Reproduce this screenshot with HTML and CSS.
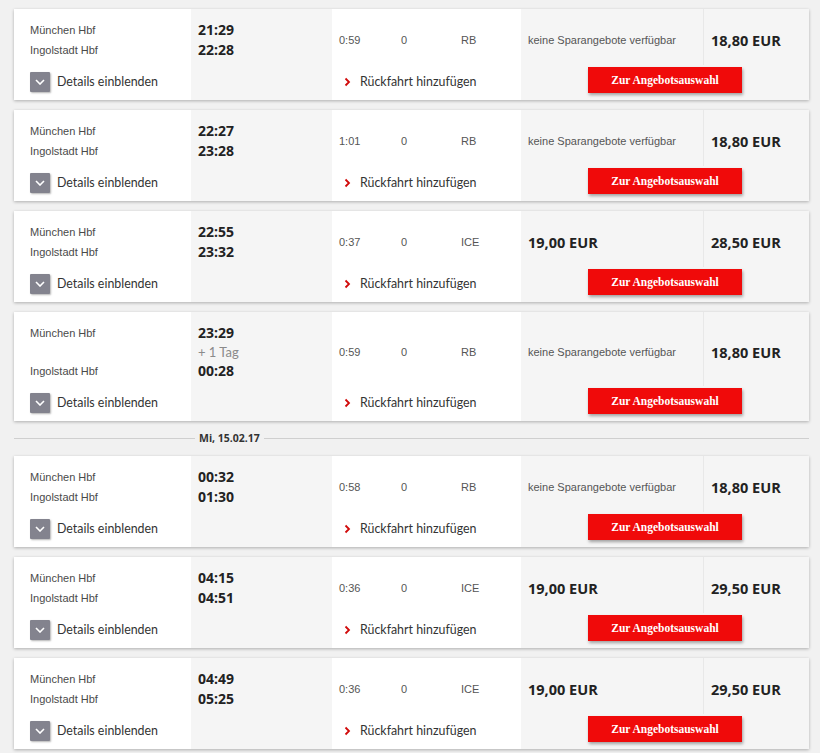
FILE: index.html
```html
<!DOCTYPE html>
<html lang="de">
<head>
    <meta charset="UTF-8">
    <meta name="viewport" content="width=device-width, initial-scale=1.0">
    <title>Verbindungen | München Hbf – Ingolstadt Hbf</title>
    <link rel="stylesheet" href="styles.css">
</head>
<body>

<div class="results">

    <!-- 21:29 -->
    <div class="card">
        <div class="stations">
            <div class="line">München Hbf</div>
            <div class="line">Ingolstadt Hbf</div>
        </div>
        <div class="times">
            <div class="line">21:29</div>
            <div class="line">22:28</div>
        </div>
        <div class="info">
            <span class="dur">0:59</span><span class="chg">0</span><span class="prod">RB</span>
        </div>
        <div class="fare"><span class="none">keine Sparangebote verfügbar</span></div>
        <div class="fare flex"><span class="price">18,80 EUR</span></div>
        <div class="details"><span class="toggle"><svg width="10" height="6" viewBox="0 0 10 6"><path d="M1 1 L5 5 L9 1" fill="none" stroke="#fff" stroke-width="1.6"/></svg></span>Details einblenden</div>
        <div class="return"><svg width="7" height="10" viewBox="0 0 7 10"><path d="M1.5 1.5 L5 5 L1.5 8.5" fill="none" stroke="#d10a0a" stroke-width="1.8"/></svg>Rückfahrt hinzufügen</div>
        <div class="action"><button class="offer-btn">Zur Angebotsauswahl</button></div>
    </div>

    <!-- 22:27 -->
    <div class="card">
        <div class="stations">
            <div class="line">München Hbf</div>
            <div class="line">Ingolstadt Hbf</div>
        </div>
        <div class="times">
            <div class="line">22:27</div>
            <div class="line">23:28</div>
        </div>
        <div class="info">
            <span class="dur">1:01</span><span class="chg">0</span><span class="prod">RB</span>
        </div>
        <div class="fare"><span class="none">keine Sparangebote verfügbar</span></div>
        <div class="fare flex"><span class="price">18,80 EUR</span></div>
        <div class="details"><span class="toggle"><svg width="10" height="6" viewBox="0 0 10 6"><path d="M1 1 L5 5 L9 1" fill="none" stroke="#fff" stroke-width="1.6"/></svg></span>Details einblenden</div>
        <div class="return"><svg width="7" height="10" viewBox="0 0 7 10"><path d="M1.5 1.5 L5 5 L1.5 8.5" fill="none" stroke="#d10a0a" stroke-width="1.8"/></svg>Rückfahrt hinzufügen</div>
        <div class="action"><button class="offer-btn">Zur Angebotsauswahl</button></div>
    </div>

    <!-- 22:55 -->
    <div class="card">
        <div class="stations">
            <div class="line">München Hbf</div>
            <div class="line">Ingolstadt Hbf</div>
        </div>
        <div class="times">
            <div class="line">22:55</div>
            <div class="line">23:32</div>
        </div>
        <div class="info">
            <span class="dur">0:37</span><span class="chg">0</span><span class="prod">ICE</span>
        </div>
        <div class="fare"><span class="price">19,00 EUR</span></div>
        <div class="fare flex"><span class="price">28,50 EUR</span></div>
        <div class="details"><span class="toggle"><svg width="10" height="6" viewBox="0 0 10 6"><path d="M1 1 L5 5 L9 1" fill="none" stroke="#fff" stroke-width="1.6"/></svg></span>Details einblenden</div>
        <div class="return"><svg width="7" height="10" viewBox="0 0 7 10"><path d="M1.5 1.5 L5 5 L1.5 8.5" fill="none" stroke="#d10a0a" stroke-width="1.8"/></svg>Rückfahrt hinzufügen</div>
        <div class="action"><button class="offer-btn">Zur Angebotsauswahl</button></div>
    </div>

    <!-- 23:29, next day -->
    <div class="card">
        <div class="stations">
            <div class="line">München Hbf</div>
            <div class="line small"></div>
            <div class="line">Ingolstadt Hbf</div>
        </div>
        <div class="times">
            <div class="line">23:29</div>
            <div class="line small next-day">+ 1 Tag</div>
            <div class="line">00:28</div>
        </div>
        <div class="info">
            <span class="dur">0:59</span><span class="chg">0</span><span class="prod">RB</span>
        </div>
        <div class="fare"><span class="none">keine Sparangebote verfügbar</span></div>
        <div class="fare flex"><span class="price">18,80 EUR</span></div>
        <div class="details"><span class="toggle"><svg width="10" height="6" viewBox="0 0 10 6"><path d="M1 1 L5 5 L9 1" fill="none" stroke="#fff" stroke-width="1.6"/></svg></span>Details einblenden</div>
        <div class="return"><svg width="7" height="10" viewBox="0 0 7 10"><path d="M1.5 1.5 L5 5 L1.5 8.5" fill="none" stroke="#d10a0a" stroke-width="1.8"/></svg>Rückfahrt hinzufügen</div>
        <div class="action"><button class="offer-btn">Zur Angebotsauswahl</button></div>
    </div>

    <div class="day-divider"><span>Mi, 15.02.17</span></div>

    <!-- 00:32 -->
    <div class="card">
        <div class="stations">
            <div class="line">München Hbf</div>
            <div class="line">Ingolstadt Hbf</div>
        </div>
        <div class="times">
            <div class="line">00:32</div>
            <div class="line">01:30</div>
        </div>
        <div class="info">
            <span class="dur">0:58</span><span class="chg">0</span><span class="prod">RB</span>
        </div>
        <div class="fare"><span class="none">keine Sparangebote verfügbar</span></div>
        <div class="fare flex"><span class="price">18,80 EUR</span></div>
        <div class="details"><span class="toggle"><svg width="10" height="6" viewBox="0 0 10 6"><path d="M1 1 L5 5 L9 1" fill="none" stroke="#fff" stroke-width="1.6"/></svg></span>Details einblenden</div>
        <div class="return"><svg width="7" height="10" viewBox="0 0 7 10"><path d="M1.5 1.5 L5 5 L1.5 8.5" fill="none" stroke="#d10a0a" stroke-width="1.8"/></svg>Rückfahrt hinzufügen</div>
        <div class="action"><button class="offer-btn">Zur Angebotsauswahl</button></div>
    </div>

    <!-- 04:15 -->
    <div class="card">
        <div class="stations">
            <div class="line">München Hbf</div>
            <div class="line">Ingolstadt Hbf</div>
        </div>
        <div class="times">
            <div class="line">04:15</div>
            <div class="line">04:51</div>
        </div>
        <div class="info">
            <span class="dur">0:36</span><span class="chg">0</span><span class="prod">ICE</span>
        </div>
        <div class="fare"><span class="price">19,00 EUR</span></div>
        <div class="fare flex"><span class="price">29,50 EUR</span></div>
        <div class="details"><span class="toggle"><svg width="10" height="6" viewBox="0 0 10 6"><path d="M1 1 L5 5 L9 1" fill="none" stroke="#fff" stroke-width="1.6"/></svg></span>Details einblenden</div>
        <div class="return"><svg width="7" height="10" viewBox="0 0 7 10"><path d="M1.5 1.5 L5 5 L1.5 8.5" fill="none" stroke="#d10a0a" stroke-width="1.8"/></svg>Rückfahrt hinzufügen</div>
        <div class="action"><button class="offer-btn">Zur Angebotsauswahl</button></div>
    </div>

    <!-- 04:49 -->
    <div class="card">
        <div class="stations">
            <div class="line">München Hbf</div>
            <div class="line">Ingolstadt Hbf</div>
        </div>
        <div class="times">
            <div class="line">04:49</div>
            <div class="line">05:25</div>
        </div>
        <div class="info">
            <span class="dur">0:36</span><span class="chg">0</span><span class="prod">ICE</span>
        </div>
        <div class="fare"><span class="price">19,00 EUR</span></div>
        <div class="fare flex"><span class="price">29,50 EUR</span></div>
        <div class="details"><span class="toggle"><svg width="10" height="6" viewBox="0 0 10 6"><path d="M1 1 L5 5 L9 1" fill="none" stroke="#fff" stroke-width="1.6"/></svg></span>Details einblenden</div>
        <div class="return"><svg width="7" height="10" viewBox="0 0 7 10"><path d="M1.5 1.5 L5 5 L1.5 8.5" fill="none" stroke="#d10a0a" stroke-width="1.8"/></svg>Rückfahrt hinzufügen</div>
        <div class="action"><button class="offer-btn">Zur Angebotsauswahl</button></div>
    </div>

</div>

</body>
</html>
```

FILE: styles.css
```css
* {
    margin: 0;
    padding: 0;
    box-sizing: border-box;
}

body {
    font-family: 'Liberation Sans', Arial, sans-serif;
    background: #f1f1f1;
    color: #333;
    padding: 9px 11px 10px 14px;
}

.results {
    display: flex;
    flex-direction: column;
    gap: 10px;
}

/* Connection card */
.card {
    display: grid;
    grid-template-columns: 177px 141px 189px 182px 106px;
    grid-template-rows: auto 35px;
    background: #fff;
    box-shadow: 0 1px 3px rgba(0, 0, 0, 0.28);
}

.line {
    height: 20px;
    line-height: 20px;
}

.line.small {
    height: 18px;
    line-height: 18px;
}

.stations {
    grid-column: 1;
    grid-row: 1;
    padding: 11px 0 5px 16px;
    font-size: 11px;
    color: #4a4a4a;
}

.times {
    grid-column: 2;
    grid-row: 1 / 3;
    background: #f5f5f5;
    padding: 11px 0 0 7px;
    font-family: 'Open Sans', sans-serif;
    font-weight: 700;
    font-size: 14px;
    color: #222;
}

.times .next-day {
    font-family: 'Lato', sans-serif;
    font-weight: 400;
    font-size: 13px;
    color: #8a8a8a;
}

.info {
    grid-column: 3;
    grid-row: 1;
    display: flex;
    align-items: center;
    padding: 6px 0 0 7px;
    font-size: 11px;
    color: #555;
}

.info .dur {
    width: 62px;
}

.info .chg {
    width: 60px;
}

.fare {
    grid-row: 1;
    background: #f5f5f5;
    display: flex;
    align-items: center;
    padding: 6px 0 0 7px;
}

.fare.flex {
    border-left: 1px solid #e8e8e8;
    padding-left: 7px;
}

.fare .none {
    font-size: 11px;
    color: #555;
}

.fare .price {
    font-family: 'Open Sans', sans-serif;
    font-weight: 700;
    font-size: 14.5px;
    color: #222;
}

/* Bottom row */
.details {
    grid-column: 1;
    grid-row: 2;
    display: flex;
    align-items: center;
    padding: 0 0 2px 16px;
    font-family: 'Lato', sans-serif;
    font-size: 12.4px;
    color: #333;
}

.toggle {
    width: 20px;
    height: 20px;
    margin-right: 7px;
    background: #83838e;
    border-radius: 1px;
    box-shadow: 1px 1px 2px rgba(0, 0, 0, 0.3);
    display: flex;
    align-items: center;
    justify-content: center;
}

.return {
    grid-column: 3;
    grid-row: 2;
    display: flex;
    align-items: center;
    gap: 9px;
    padding: 0 0 2px 12px;
    font-family: 'Lato', sans-serif;
    font-size: 12.4px;
    color: #333;
}

.action {
    grid-column: 4 / 6;
    grid-row: 2;
    background: #f5f5f5;
    display: flex;
    justify-content: center;
    align-items: flex-start;
    padding-top: 2px;
}

.offer-btn {
    width: 154px;
    height: 26px;
    border: none;
    background: #f00a0a;
    color: #fff;
    font-family: 'Liberation Serif', 'Times New Roman', serif;
    font-weight: 700;
    font-size: 11.5px;
    box-shadow: 1px 2px 3px rgba(0, 0, 0, 0.35);
    cursor: pointer;
}

/* Date divider */
.day-divider {
    height: 15px;
    position: relative;
    display: flex;
    align-items: center;
}

.day-divider::before {
    content: "";
    flex: 1;
    height: 1px;
    background: #cfcfcf;
}

.day-divider span {
    position: absolute;
    left: 181px;
    top: -1px;
    line-height: 16px;
    padding: 0 4px;
    background: #f1f1f1;
    font-family: 'Open Sans', sans-serif;
    font-weight: 700;
    font-size: 10.5px;
    color: #333;
}
```
